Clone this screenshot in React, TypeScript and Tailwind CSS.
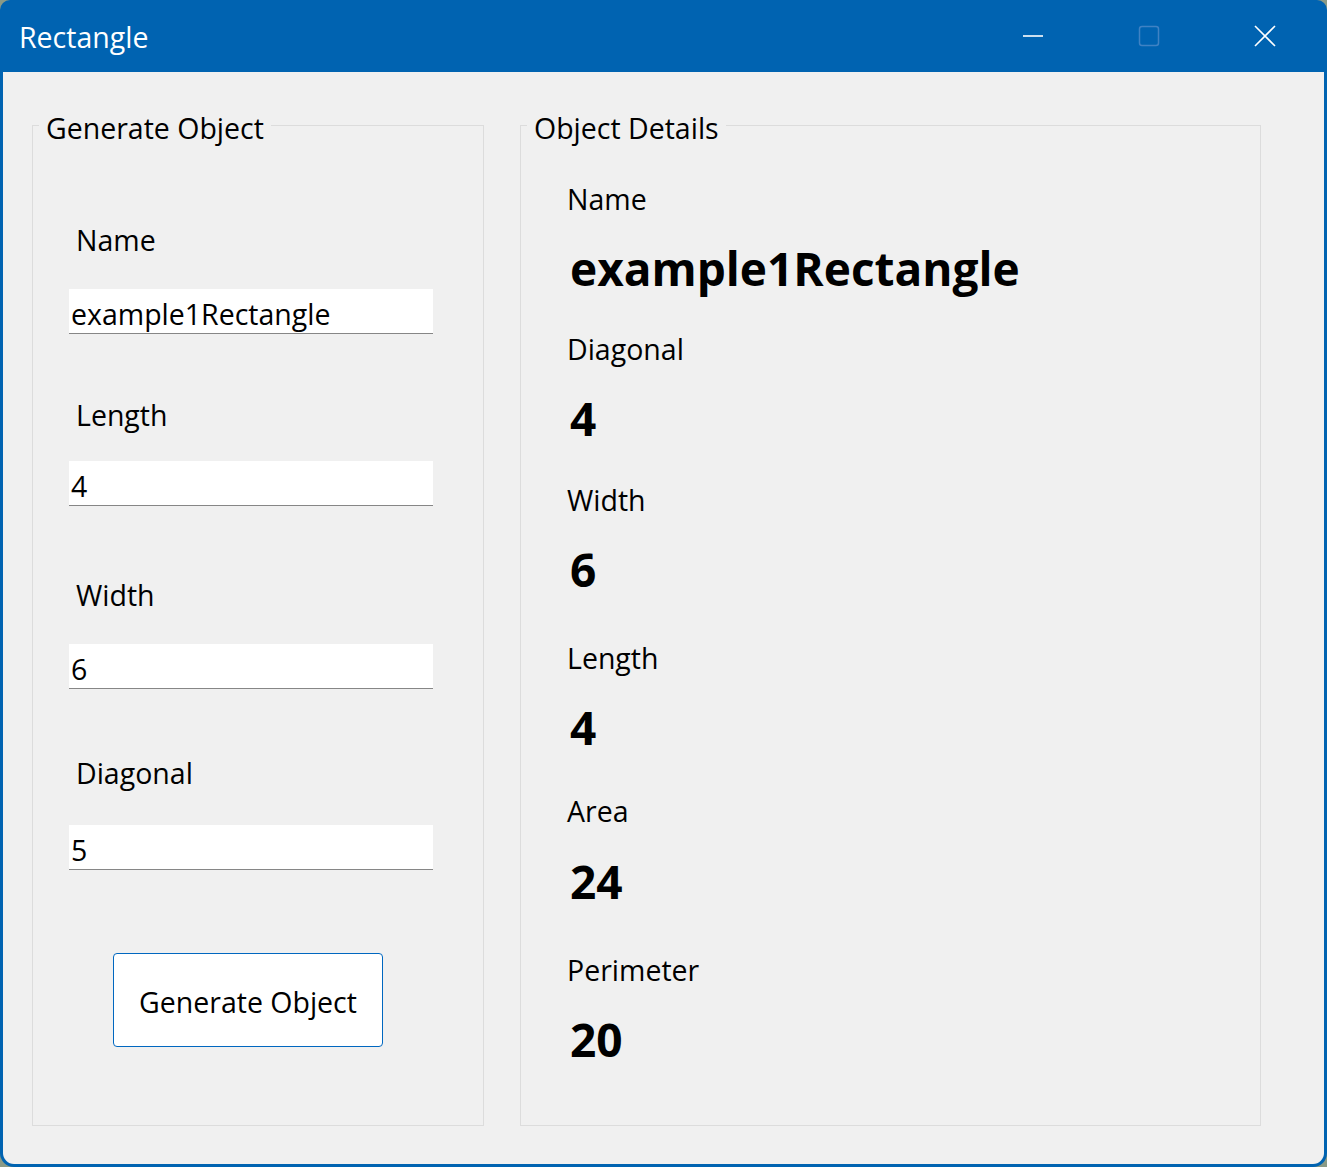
import { ReactNode } from "react";

const font = { fontFamily: '"Open Sans", "Noto Sans", sans-serif' };

function Field({ value, className }: { value: string; className: string }) {
  return (
    <div
      className={`ml-[36px] w-[364px] h-[45px] bg-white border-b border-[#868686] pl-[2px] pt-[6px] flex items-center text-[28.5px] leading-[36px] text-black ${className}`}
    >
      {value}
    </div>
  );
}

function Label({ children, className }: { children: ReactNode; className: string }) {
  return (
    <div className={`text-[28.5px] leading-[36px] text-black ${className}`}>{children}</div>
  );
}

function Value({ children, className }: { children: ReactNode; className: string }) {
  return (
    <div className={`ml-[49px] text-[46px] leading-[60px] font-bold text-black ${className}`}>
      {children}
    </div>
  );
}

export default function App() {
  return (
    <div className="w-[1327px] h-[1167px] bg-[#8a9a86]" style={font}>
      <div className="w-full h-full bg-[#0063B1] rounded-t-[10px] rounded-b-[14px] flex flex-col overflow-hidden">
        {/* title bar */}
        <div className="h-[72px] flex items-center text-white">
          <span className="pl-[19px] text-[28.5px] leading-[36px] mt-[2px]">Rectangle</span>
          <div className="flex-1" />
          <div className="w-[116px] h-full flex items-center justify-center">
            <svg width="22" height="4" viewBox="0 0 22 4">
              <line x1="1" y1="2" x2="21" y2="2" stroke="white" strokeWidth="1.6" />
            </svg>
          </div>
          <div className="w-[116px] h-full flex items-center justify-center">
            <svg width="22" height="22" viewBox="0 0 22 22">
              <rect x="1.5" y="1.5" width="19" height="19" rx="2.5" fill="none" stroke="#3f82c4" strokeWidth="1.5" />
            </svg>
          </div>
          <div className="w-[116px] h-full flex items-center justify-center mr-[4px]">
            <svg width="22" height="22" viewBox="0 0 22 22">
              <path d="M1 1 L21 21 M21 1 L1 21" stroke="white" strokeWidth="1.6" />
            </svg>
          </div>
        </div>

        {/* client area */}
        <div className="flex-1 mx-[3px] mb-[3px] bg-[#F0F0F0] rounded-b-[11px] flex items-start">
          {/* left group */}
          <fieldset className="ml-[29px] mt-[32px] w-[452px] h-[1022px] border border-[#DCDCDC]">
            <legend className="ml-[6px] px-[7px] pt-[6px] text-[28.5px] leading-[36px] text-black">
              Generate Object
            </legend>
            <Label className="mt-[76px] ml-[43px]">Name</Label>
            <Field value="example1Rectangle" className="mt-[31px]" />
            <Label className="mt-[63px] ml-[43px]">Length</Label>
            <Field value="4" className="mt-[28px]" />
            <Label className="mt-[71px] ml-[43px]">Width</Label>
            <Field value="6" className="mt-[31px]" />
            <Label className="mt-[66px] ml-[43px]">Diagonal</Label>
            <Field value="5" className="mt-[34px]" />
            <button className="mt-[83px] ml-[80px] w-[270px] h-[94px] bg-white border border-[#0067C0] rounded-[4px] pt-[4px] text-[28.5px] leading-[36px] text-black">
              Generate Object
            </button>
          </fieldset>

          {/* right group */}
          <fieldset className="ml-[36px] mt-[32px] w-[741px] h-[1022px] border border-[#DCDCDC]">
            <legend className="ml-[6px] px-[7px] pt-[6px] text-[28.5px] leading-[36px] text-black">
              Object Details
            </legend>
            <Label className="mt-[35px] ml-[46px]">Name</Label>
            <Value className="mt-[21px]">example1Rectangle</Value>
            <Label className="mt-[33px] ml-[46px]">Diagonal</Label>
            <Value className="mt-[21px]">4</Value>
            <Label className="mt-[34px] ml-[46px]">Width</Label>
            <Value className="mt-[21px]">6</Value>
            <Label className="mt-[41px] ml-[46px]">Length</Label>
            <Value className="mt-[21px]">4</Value>
            <Label className="mt-[36px] ml-[46px]">Area</Label>
            <Value className="mt-[22px]">24</Value>
            <Label className="mt-[41px] ml-[46px]">Perimeter</Label>
            <Value className="mt-[21px]">20</Value>
          </fieldset>
        </div>
      </div>
    </div>
  );
}
